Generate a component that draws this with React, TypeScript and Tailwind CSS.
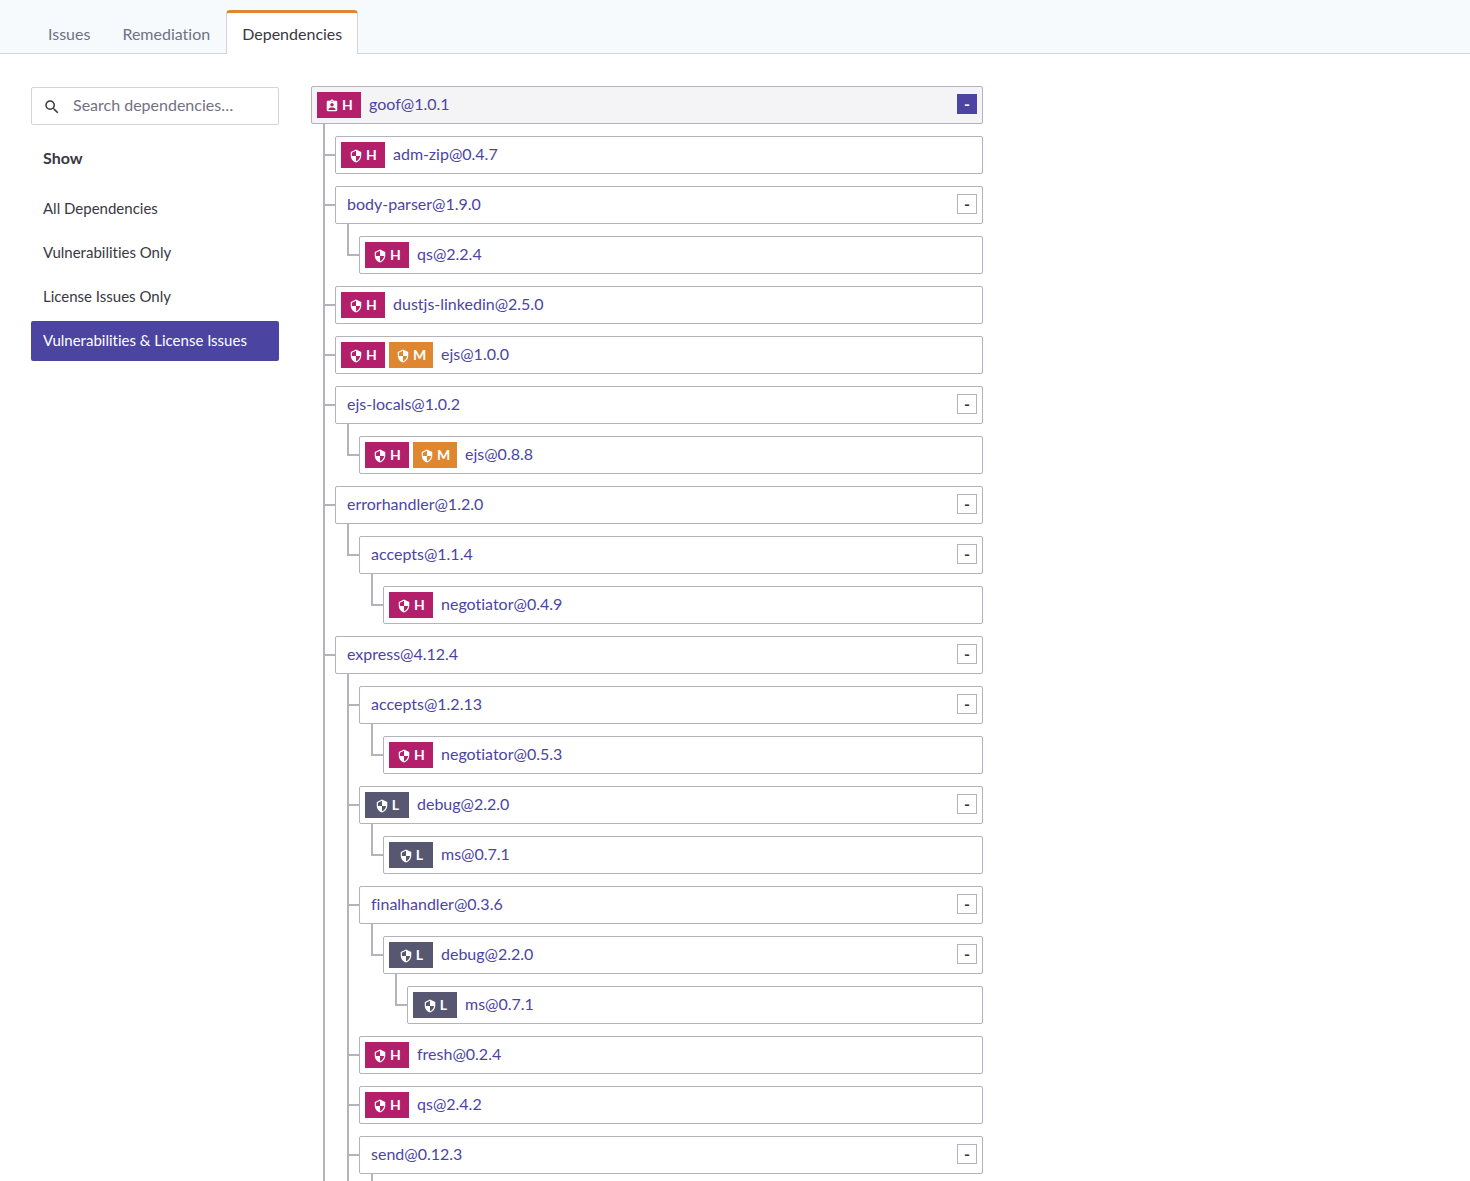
import { useState } from "react";
import { MdAssignmentInd, MdSearch, MdSecurity } from "react-icons/md";

type Severity = "H" | "M" | "L";

interface Dependency {
  name: string;
  severities?: Severity[];
  children?: Dependency[];
}

const tabs = ["Issues", "Remediation", "Dependencies"];

const filters = [
  "All Dependencies",
  "Vulnerabilities Only",
  "License Issues Only",
  "Vulnerabilities & License Issues",
];

const severityStyles: Record<Severity, string> = {
  H: "bg-[#b31f6b]",
  M: "bg-[#df8730]",
  L: "bg-[#585772]",
};

const severityNames: Record<Severity, string> = {
  H: "High severity",
  M: "Medium severity",
  L: "Low severity",
};

const project: Dependency = {
  name: "goof@1.0.1",
  severities: ["H"],
  children: [
    { name: "adm-zip@0.4.7", severities: ["H"] },
    { name: "body-parser@1.9.0", children: [{ name: "qs@2.2.4", severities: ["H"] }] },
    { name: "dustjs-linkedin@2.5.0", severities: ["H"] },
    { name: "ejs@1.0.0", severities: ["H", "M"] },
    { name: "ejs-locals@1.0.2", children: [{ name: "ejs@0.8.8", severities: ["H", "M"] }] },
    {
      name: "errorhandler@1.2.0",
      children: [
        { name: "accepts@1.1.4", children: [{ name: "negotiator@0.4.9", severities: ["H"] }] },
      ],
    },
    {
      name: "express@4.12.4",
      children: [
        { name: "accepts@1.2.13", children: [{ name: "negotiator@0.5.3", severities: ["H"] }] },
        {
          name: "debug@2.2.0",
          severities: ["L"],
          children: [{ name: "ms@0.7.1", severities: ["L"] }],
        },
        {
          name: "finalhandler@0.3.6",
          children: [
            {
              name: "debug@2.2.0",
              severities: ["L"],
              children: [{ name: "ms@0.7.1", severities: ["L"] }],
            },
          ],
        },
        { name: "fresh@0.2.4", severities: ["H"] },
        { name: "qs@2.4.2", severities: ["H"] },
        {
          name: "send@0.12.3",
          children: [{ name: "ms@0.7.1", severities: ["L"] }],
        },
        { name: "serve-static@1.9.3" },
      ],
    },
    { name: "marked@0.3.5", severities: ["H"] },
  ],
};

function SeverityBadge({ severity, root }: { severity: Severity; root: boolean }) {
  const Icon = root ? MdAssignmentInd : MdSecurity;

  return (
    <span
      title={severityNames[severity]}
      className={`flex h-[26px] w-11 shrink-0 items-center justify-center gap-[3px] text-sm font-bold text-white ${severityStyles[severity]}`}
    >
      <Icon className="mt-0.5 size-[14px]" aria-hidden="true" />
      {severity}
    </span>
  );
}

function DependencyNode({ item, root = false }: { item: Dependency; root?: boolean }) {
  const [open, setOpen] = useState(true);
  const children = item.children ?? [];
  const severities = item.severities ?? [];

  return (
    <>
      <div
        className={`flex h-[38px] items-center rounded-xs border border-[#b3b2bd] px-[5px] ${
          root ? "bg-[#f4f4f6]" : "bg-white"
        }`}
      >
        <div className="flex gap-1">
          {severities.map((severity) => (
            <SeverityBadge key={severity} severity={severity} root={root} />
          ))}
        </div>
        <a
          href="#"
          className={`pb-0.5 text-[#4b45a1] hover:underline ${
            severities.length > 0 ? "ml-2" : "ml-1.5"
          }`}
        >
          {item.name}
        </a>
        {children.length > 0 && (
          <button
            type="button"
            onClick={() => setOpen(!open)}
            aria-expanded={open}
            aria-label={`Toggle ${item.name}`}
            className={`mt-[7px] ml-auto flex size-5 items-center justify-center self-start border text-base font-bold ${
              root
                ? "border-[#4b45a1] bg-[#4b45a1] text-white"
                : "border-[#b3b2bd] bg-white text-[#393842]"
            }`}
          >
            {open ? "-" : "+"}
          </button>
        )}
      </div>

      {open && children.length > 0 && (
        <ul className="pl-3">
          {children.map((child, index) => (
            <li key={index} className="flex">
              <div className="flex w-3 shrink-0 flex-col">
                <div className="h-8 border-b-2 border-l-2 border-[#b3b2bd]" />
                {index < children.length - 1 && (
                  <div className="flex-1 border-l-2 border-[#b3b2bd]" />
                )}
              </div>
              <div className="min-w-0 flex-1 pt-3">
                <DependencyNode item={child} />
              </div>
            </li>
          ))}
        </ul>
      )}
    </>
  );
}

export default function App() {
  const [activeTab, setActiveTab] = useState("Dependencies");
  const [activeFilter, setActiveFilter] = useState(filters[3]);
  const [search, setSearch] = useState("");

  return (
    <div className="min-h-screen bg-white font-['Lato',sans-serif] text-base text-[#393842] [font-variant-ligatures:none]">
      <nav className="flex h-[54px] items-end border-b border-[#d3d3d9] bg-[#f6fafd] pl-8">
        {tabs.map((tab) => (
          <button
            key={tab}
            type="button"
            onClick={() => setActiveTab(tab)}
            className={
              tab === activeTab
                ? "-mb-px h-11 rounded-t-sm border-x border-t-3 border-x-[#d3d3d9] border-t-[#df8730] bg-white px-[15px]"
                : "-mb-px h-11 px-4 pt-[3px] text-[#727184]"
            }
          >
            {tab}
          </button>
        ))}
      </nav>

      <div className="flex gap-8 px-[31px] py-8">
        <aside className="w-[248px] shrink-0 pt-px">
          <label className="flex h-[38px] items-center rounded-xs border border-[#d3d3d9] px-[11px]">
            <MdSearch className="mt-0.5 size-[18px] shrink-0" aria-hidden="true" />
            <input
              type="text"
              value={search}
              onChange={(e) => setSearch(e.target.value)}
              placeholder="Search dependencies…"
              aria-label="Search dependencies"
              className="ml-3 min-w-0 flex-1 pb-0.5 outline-none placeholder:text-[#727184]"
            />
          </label>

          <h2 className="mt-[21px] px-3 font-bold">Show</h2>

          <ul className="mt-[19px] flex flex-col gap-1 text-[15px]">
            {filters.map((filter) => (
              <li key={filter}>
                <button
                  type="button"
                  onClick={() => setActiveFilter(filter)}
                  className={`h-10 w-full rounded-xs px-3 pb-0.5 text-left whitespace-nowrap ${
                    filter === activeFilter ? "bg-[#4b45a1] text-white" : ""
                  }`}
                >
                  {filter}
                </button>
              </li>
            ))}
          </ul>
        </aside>

        <main className="max-w-2xl min-w-0 flex-1">
          <DependencyNode item={project} root />
        </main>
      </div>
    </div>
  );
}
